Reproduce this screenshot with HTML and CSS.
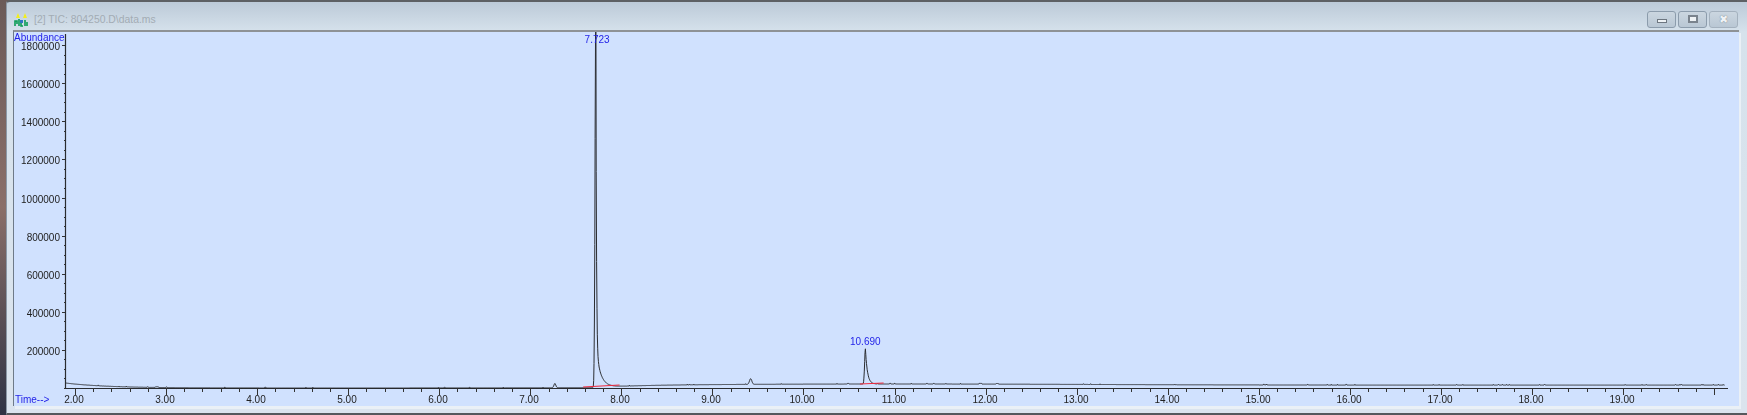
FILE: index.html
```html
<!DOCTYPE html>
<html lang="en">
<head>
    <meta charset="UTF-8">
    <title>[2] TIC: 804250.D\data.ms</title>
    <link rel="stylesheet" href="styles.css">
</head>
<body>
    <div class="window">
        <div class="titlebar">
            <svg class="app-icon" width="15" height="15" viewBox="0 0 15 15">
                <path d="M1 14V9H3V12M5 14V7M9 14H7V10H9M11 14V8M13 14V10" stroke="#0b9c55" stroke-width="1.6" fill="none"/>
                <path d="M2 6L4 1L6 6ZM9 6L11 1L13 6Z" fill="#f2ee1e"/>
                <path d="M6 8h3v3H6z" fill="#2f74c4"/>
            </svg>
            <span class="title">[2] TIC: 804250.D\data.ms</span>
            <div class="win-buttons">
                <div class="win-btn"><span class="min-glyph"></span></div>
                <div class="win-btn"><span class="max-glyph"></span></div>
                <div class="win-btn win-close"><span>&#10006;</span></div>
            </div>
        </div>
        <div class="plot">
            <svg id="chart" class="chart" width="1726" height="374" viewBox="0 0 1726 374"></svg>
        </div>
    </div>
    <script src="script.js"></script>
</body>
</html>
```

FILE: styles.css
```css
* {
    margin: 0;
    padding: 0;
    box-sizing: border-box;
}

html, body {
    width: 1747px;
    height: 415px;
    overflow: hidden;
}

body {
    font-family: "Liberation Sans", Arial, sans-serif;
    background: linear-gradient(to bottom, #6b5a58, #8a6f68 50%, #2f3344);
    padding: 0 0 0 6px;
}

.window {
    width: 1741px;
    height: 415px;
    background: linear-gradient(to bottom, #bccad8, #d6e2ec 30px, #dbe4ee);
    border-top: 2px solid #5d6064;
    border-left: 1px solid #8b98a6;
    border-bottom: 2px solid #55585c;
    border-top-left-radius: 4px;
    padding: 0 6px;
    display: flex;
    flex-direction: column;
}

.titlebar {
    height: 28px;
    display: flex;
    align-items: center;
    flex-shrink: 0;
    padding: 9px 0 3px 1px;
}

.app-icon {
    margin-right: 5px;
}

.title {
    font-size: 10.4px;
    color: #a3acb4;
}

.win-buttons {
    margin-left: auto;
    display: flex;
    gap: 2px;
    margin-right: 3px;
}

.win-btn {
    width: 29px;
    height: 17px;
    border: 1px solid #8c9cac;
    border-radius: 3px;
    background: linear-gradient(to bottom, #cbd6e0, #b9c7d4);
    display: flex;
    align-items: center;
    justify-content: center;
}

.min-glyph {
    width: 10px;
    height: 4px;
    margin-top: 3px;
    background: #eef2f5;
    border: 1px solid #6d7680;
}

.max-glyph {
    width: 10px;
    height: 8px;
    background: #eef2f5;
    border: 2px solid #7a838d;
}

.win-close {
    color: #eef2f5;
    font-size: 11px;
    text-shadow: 0 0 1px #55606a;
    border-color: #a4b1be;
}

.plot {
    width: 1726px;
    height: 376px;
    background: #d0e1fe;
    border-top: 2px solid #8e9296;
    border-left: 1px solid #6e7a88;
    box-shadow: 2px 3px 0 #eaf0f6;
}

.chart {
    display: block;
    filter: blur(0.35px);
}

.axis-label {
    font-size: 10px;
    fill: #222;
}

.blue-label {
    font-size: 10px;
    fill: #1f1fe8;
}
```

FILE: script.js
```js
// Chromatogram drawn from scale values read off the instrument window
const svg = document.getElementById('chart');
const NS = 'http://www.w3.org/2000/svg';

// the svg starts at page x=14, y=32
const originX = 51;
const axisY = 356;
const axisEnd = 1714;
const pxPerMin = 91.06;
const pxPerUnit = 38.1 / 200000;

const timeToX = t => 61 + (t - 2) * pxPerMin;
const abundToY = a => axisY - a * pxPerUnit;

function add(tag, attrs, text) {
    const el = document.createElementNS(NS, tag);
    Object.keys(attrs).forEach(k => el.setAttribute(k, attrs[k]));
    if (text) el.textContent = text;
    svg.appendChild(el);
    return el;
}

// axes
add('path', { d: `M${originX}.5 2V${axisY}.5H${axisEnd}`, stroke: '#2a2c30', 'stroke-width': 1.2, fill: 'none' });

// y ticks, long every 200000, short between
for (let a = 0; a <= 1800000; a += 50000) {
    const y = Math.round(abundToY(a)) + 0.5;
    const long = a % 200000 === 0 && a > 0;
    add('path', { d: `M${originX - (long ? 3 : 1)} ${y}H${originX}`, stroke: '#333' });
    if (long) {
        add('text', { x: originX - 5, y: y + 4, 'text-anchor': 'end', class: 'axis-label' }, String(a));
    }
}

// x ticks, long at whole minutes, short every 0.2
for (let i = 0; i <= 90; i++) {
    const t = 2 + i * 0.2;
    const x = Math.round(timeToX(t)) + 0.5;
    add('path', { d: `M${x} ${axisY}v4`, stroke: '#333' });
}
for (let m = 2; m <= 20; m++) {
    const x = Math.round(timeToX(m)) + 0.5;
    add('path', { d: `M${x} ${axisY}v7`, stroke: '#333' });
    if (m < 20) {
        add('text', { x: x - 1.5, y: 371, 'text-anchor': 'middle', class: 'axis-label' }, m.toFixed(2));
    }
}

add('text', { x: 0, y: 8.5, class: 'blue-label' }, 'Abundance');
add('text', { x: 1, y: 371, class: 'blue-label' }, 'Time-->');

// small seeded noise so the baseline has the speckle of the original
let seed = 7;
function noise() {
    seed = (seed * 16807) % 2147483647;
    return seed / 2147483647;
}

function signal(t) {
    let a = 0;
    // solvent tail at the start
    a += 26000 * Math.exp(-(t - 1.9) / 0.45);
    // column bleed after the main peak
    if (t > 7.7) a += 15000 * (1 - Math.exp(-(t - 7.7) / 0.5));
    a += 6000 * Math.exp(-Math.pow((t - 11) / 3, 2));
    // main peak, sharp front and short tail
    if (t >= 7.72) a += 1830000 * Math.exp(-(t - 7.72) / 0.006) + 210000 * Math.exp(-(t - 7.72) / 0.05);
    else a += 2040000 * Math.exp(-Math.pow((t - 7.72) / 0.012, 2));
    // second peak
    if (t >= 10.68) a += 185000 * Math.exp(-(t - 10.68) / 0.022);
    else a += 185000 * Math.exp(-Math.pow((t - 10.68) / 0.012, 2));
    // minor peaks
    a += 22000 * Math.exp(-Math.pow((t - 7.27) / 0.015, 2));
    a += 30000 * Math.exp(-Math.pow((t - 9.42) / 0.018, 2));
    return a;
}

let d = '';
let jitter = 0;
for (let t = 1.9; t <= 20.12; t += 0.004) {
    // speckle: rare single-pixel blips
    if (jitter > 0) jitter = noise() > 0.5 ? 0 : jitter;
    else if (noise() > 0.985) jitter = 3500;
    const x = timeToX(t).toFixed(1);
    const y = abundToY(signal(t) + jitter).toFixed(1);
    d += (d ? 'L' : 'M') + x + ' ' + y;
}
add('path', { d: d, stroke: '#2a2c30', 'stroke-width': 1, fill: 'none' });

// integration baselines
add('path', { d: `M${timeToX(7.58)} ${axisY - 1}L${timeToX(7.98)} ${axisY - 3}`, stroke: '#f0283c', fill: 'none' });
add('path', { d: `M${timeToX(10.62)} ${axisY - 4}L${timeToX(10.88)} ${axisY - 5}`, stroke: '#f0283c', fill: 'none' });

// peak labels
add('text', { x: timeToX(7.723) + 1, y: 11, 'text-anchor': 'middle', class: 'blue-label' }, '7.723');
add('text', { x: timeToX(10.69) - 1, y: 313, 'text-anchor': 'middle', class: 'blue-label' }, '10.690');
```
